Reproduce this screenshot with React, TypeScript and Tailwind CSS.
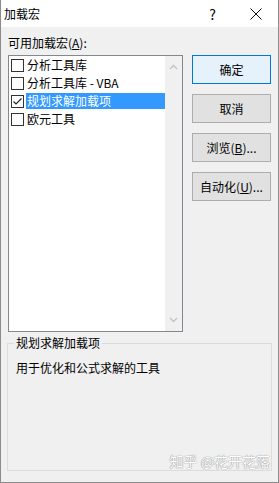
import React from "react";

interface AddIn {
  name: string;
  checked: boolean;
  selected?: boolean;
}

const addIns: AddIn[] = [
  { name: "分析工具库", checked: false },
  { name: "分析工具库 - VBA", checked: false },
  { name: "规划求解加载项", checked: true, selected: true },
  { name: "欧元工具", checked: false },
];

const Checkbox = ({ checked }: { checked: boolean }) => (
  <span className="w-[13px] h-[13px] shrink-0 border border-[#333] bg-white flex items-center justify-center">
    {checked && (
      <svg width="11" height="11" viewBox="0 0 11 11">
        <path d="M1.5 5.5 L4 8 L9.5 2.5" fill="none" stroke="#222" strokeWidth="1.2" />
      </svg>
    )}
  </span>
);

const Chevron = ({ up }: { up?: boolean }) => (
  <svg width="9" height="6" viewBox="0 0 9 6">
    <path
      d={up ? "M1 5 L4.5 1.5 L8 5" : "M1 1 L4.5 4.5 L8 1"}
      fill="none"
      stroke="#c2c2c2"
      strokeWidth="1.3"
    />
  </svg>
);

const DialogButton = ({
  children,
  primary,
}: {
  children: React.ReactNode;
  primary?: boolean;
}) => (
  <button
    className={
      primary
        ? "w-[79px] h-[29px] border border-[#0078d7] bg-[#e5f1fb] text-[12px] text-black"
        : "w-[79px] h-[29px] border border-[#adadad] bg-[#e1e1e1] text-[12px] text-black"
    }
  >
    {children}
  </button>
);

const App = () => {
  return (
    <div
      className="w-[279px] h-[483px] bg-[#f0f0f0] border-x border-b border-[#8c8c8c] flex flex-col text-black"
      style={{ fontFamily: '"Noto Sans CJK SC", "Noto Sans", sans-serif' }}
    >
      <div className="h-[27px] bg-white flex items-center shrink-0">
        <span className="ml-[3px] text-[12px]">加载宏</span>
        <span className="ml-auto mr-[34px] text-[14px] leading-none">?</span>
        <svg width="12" height="12" viewBox="0 0 12 12" className="mr-[16px]">
          <path d="M0.5 0.5 L11.5 11.5 M11.5 0.5 L0.5 11.5" stroke="#111" strokeWidth="1" />
        </svg>
      </div>

      <div className="flex-1 px-[7px] pt-[8px] flex flex-col">
        <div className="flex">
          <div className="w-[176px] flex flex-col">
            <div className="h-[16px] leading-[16px] text-[12px]">
              可用加载宏(<u>A</u>):
            </div>
            <div className="mt-[4px] h-[277px] border border-[#828790] bg-white flex">
              <div className="flex-1 flex flex-col">
                {addIns.map((item) => (
                  <div key={item.name} className="h-[18px] flex items-center pl-[2px]">
                    <Checkbox checked={item.checked} />
                    <span
                      className={
                        item.selected
                          ? "ml-[2px] flex-1 h-[16px] leading-[16px] text-[12px] bg-[#3399ff] text-white pl-[1px] whitespace-nowrap"
                          : "ml-[2px] flex-1 h-[16px] leading-[16px] text-[12px] pl-[1px] whitespace-nowrap"
                      }
                    >
                      {item.name}
                    </span>
                  </div>
                ))}
              </div>
              <div className="w-[17px] bg-[#f0f0f0] flex flex-col items-center justify-between py-[8px]">
                <Chevron up />
                <Chevron />
              </div>
            </div>
          </div>

          <div className="ml-[9px] mt-[20px] flex flex-col gap-[10px]">
            <DialogButton primary>确定</DialogButton>
            <DialogButton>取消</DialogButton>
            <DialogButton>
              浏览(<u>B</u>)...
            </DialogButton>
            <DialogButton>
              自动化(<u>U</u>)...
            </DialogButton>
          </div>
        </div>

        <div className="relative mt-[11px] ml-[-1px] w-[265px] h-[128px] shrink-0 border border-[#dcdcdc] flex flex-col px-[8px]">
          <span className="mt-[-9px] ml-[-2px] w-fit px-[2px] bg-[#f0f0f0] text-[12px] leading-[16px]">
            规划求解加载项
          </span>
          <div className="mt-[9px] text-[12px] leading-[16px]">用于优化和公式求解的工具</div>
          <div className="absolute right-[1px] bottom-[0px] text-[14px] leading-[18px] text-white [text-shadow:0_0_1px_#8a8a8a,0_0_1px_#8a8a8a]">
            知乎 @花开花落
          </div>
        </div>
      </div>
    </div>
  );
};

export default App;
